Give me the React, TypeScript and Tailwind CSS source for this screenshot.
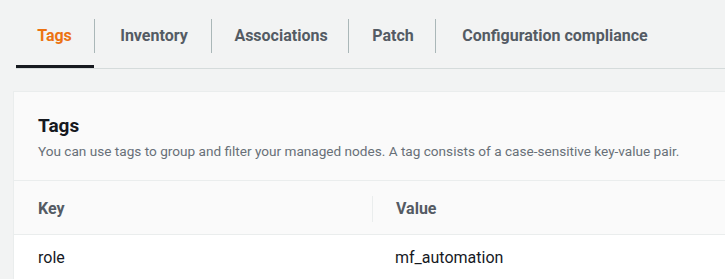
import React from "react";

const tabs: { t: string; w: string }[] = [
  { t: "Tags", w: "w-[33px]" },
  { t: "Inventory", w: "w-[70px]" },
  { t: "Associations", w: "w-[90px]" },
  { t: "Patch", w: "w-[40px]" },
  { t: "Configuration compliance", w: "w-[190px]" },
];

export default function App() {
  return (
    <div
      className="w-[725px] h-[279px] overflow-hidden bg-[#f2f3f3]"
      style={{ fontFamily: "Roboto, 'Open Sans', sans-serif" }}
    >
      <div className="pt-[16px] pl-4">
        <div className="flex border-b border-[#d5dbdb] h-[53px]">
          {tabs.map((tab, i) => (
            <div key={tab.t} className="flex h-full">
              {i > 0 && <div className="w-px h-[34px] bg-[#aab7b8] mt-[3px]" />}
              <div
                className={
                  "h-full pt-[9px] text-[16px] leading-[22px] font-bold whitespace-nowrap " +
                  (i === 0
                    ? "pl-[22px] pr-[23px] text-[#ec7211] border-b-[3px] border-[#16191f]"
                    : "pl-[24px] pr-[22px] text-[#545b64]")
                }
              >
                <div className={tab.w + " flex justify-center"}>{tab.t}</div>
              </div>
            </div>
          ))}
        </div>
      </div>
      <div className="ml-[13px] mt-[22px] bg-[#fafafa] border-l border-t border-[#eaeded]">
        <div className="pt-[21px] pb-[19px] px-6">
          <div className="text-[19px] leading-[26px] font-bold text-[#16191f]">Tags</div>
          <div className="mt-[2px] text-[13.6px] leading-[20px] text-[#687078]">
            You can use tags to group and filter your managed nodes. A tag consists of a case-sensitive key-value pair.
          </div>
        </div>
        <div className="flex border-t border-b border-[#eaeded] h-[55px] items-center pt-[3px]">
          <div className="w-[358px] pl-6 text-[16px] font-bold text-[#545b64]">Key</div>
          <div className="w-px h-[26px] bg-[#eaeded]" />
          <div className="pl-[23px] text-[16px] font-bold text-[#545b64]">Value</div>
        </div>
        <div className="flex bg-white h-[60px] pt-[12px] text-[16px] leading-[22px] text-[#16191f]">
          <div className="w-[358px] pl-6">role</div>
          <div className="pl-[23px]">mf_automation</div>
        </div>
      </div>
    </div>
  );
}
